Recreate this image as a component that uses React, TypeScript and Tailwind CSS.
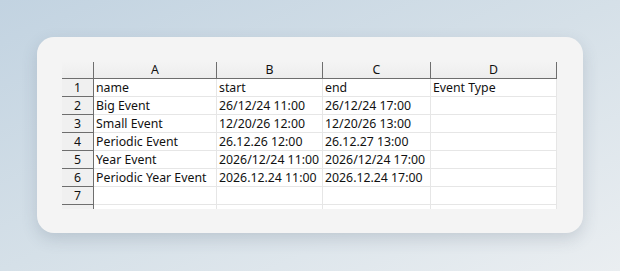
const COLS = [
  { id: "A", w: "w-[123px]" },
  { id: "B", w: "w-[106px]" },
  { id: "C", w: "w-[108px]" },
  { id: "D", w: "w-[126px]" },
];

const ROWS: string[][] = [
  ["name", "start", "end", "Event Type"],
  ["Big Event", "26/12/24 11:00", "26/12/24 17:00", ""],
  ["Small Event", "12/20/26 12:00", "12/20/26 13:00", ""],
  ["Periodic Event", "26.12.26 12:00", "26.12.27 13:00", ""],
  ["Year Event", "2026/12/24 11:00", "2026/12/24 17:00", ""],
  ["Periodic Year Event", "2026.12.24 11:00", "2026.12.24 17:00", ""],
  ["", "", "", ""],
];

export default function App() {
  return (
    <div className="w-[620px] h-[271px] bg-gradient-to-br from-[#c2d3e1] via-[#d5e0e8] to-[#eaeef1] flex items-start pt-[37px] pl-[37px] font-['Noto_Sans','Open_Sans',sans-serif] text-[12.3px] text-[#111]">
      <div className="w-[546px] h-[196px] bg-[#f4f4f4] rounded-[17px] shadow-[0_6px_16px_rgba(60,80,100,0.18)] pt-[25px] pl-[25px]">
        <div className="flex flex-col w-[495px]">
          {/* column headers */}
          <div className="flex h-[17px]">
            <div className="w-[32px] border-r border-b border-[#6e6e6e] bg-gradient-to-b from-[#f4f4f4] to-[#ededed]" />
            {COLS.map((c) => (
              <div
                key={c.id}
                className={`${c.w} border-r border-b border-[#6e6e6e] bg-gradient-to-b from-[#f4f4f4] to-[#ededed] flex items-center justify-center leading-none pt-[1px]`}
              >
                {c.id}
              </div>
            ))}
          </div>
          {ROWS.map((r, i) => (
            <div key={i} className="flex h-[18px]">
              <div className="w-[32px] border-r border-b border-[#6e6e6e] bg-[#f0f0f0] flex items-center justify-center leading-none pt-[1px]">
                {i + 1}
              </div>
              {r.map((v, j) => (
                <div
                  key={j}
                  className={`${COLS[j].w} border-r border-b border-[#e6e6e6] bg-white flex items-center pl-[2px] pt-[1px] leading-none whitespace-nowrap overflow-hidden`}
                >
                  {v}
                </div>
              ))}
            </div>
          ))}
          <div className="flex h-[4px]">
            <div className="w-[32px] border-r border-[#6e6e6e] bg-[#f0f0f0]" />
            {COLS.map((c) => (
              <div key={c.id} className={`${c.w} border-r border-[#e6e6e6] bg-white`} />
            ))}
          </div>
        </div>
      </div>
    </div>
  );
}
